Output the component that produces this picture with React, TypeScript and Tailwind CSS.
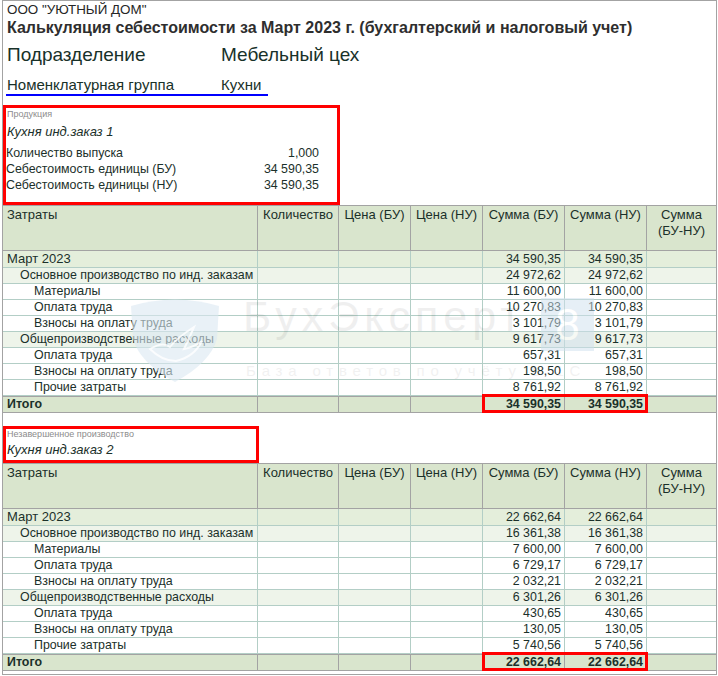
import React from "react";

// Калькуляция себестоимости — печатная форма 1С

type Row = {
    name: string;
    level: 0 | 1 | 2;
    bu: string;
    nu: string;
};

const cols = [
    { title: "Затраты", w: "w-[255px]" },
    { title: "Количество", w: "w-[81px]" },
    { title: "Цена (БУ)", w: "w-[72px]" },
    { title: "Цена (НУ)", w: "w-[72px]" },
    { title: "Сумма (БУ)", w: "w-[82px]" },
    { title: "Сумма (НУ)", w: "w-[82px]" },
    { title: "Сумма (БУ-НУ)", w: "w-[69px]" },
];

const rows1: Row[] = [
    { name: "Март 2023", level: 0, bu: "34 590,35", nu: "34 590,35" },
    { name: "Основное производство по инд. заказам", level: 1, bu: "24 972,62", nu: "24 972,62" },
    { name: "Материалы", level: 2, bu: "11 600,00", nu: "11 600,00" },
    { name: "Оплата труда", level: 2, bu: "10 270,83", nu: "10 270,83" },
    { name: "Взносы на оплату труда", level: 2, bu: "3 101,79", nu: "3 101,79" },
    { name: "Общепроизводственные расходы", level: 1, bu: "9 617,73", nu: "9 617,73" },
    { name: "Оплата труда", level: 2, bu: "657,31", nu: "657,31" },
    { name: "Взносы на оплату труда", level: 2, bu: "198,50", nu: "198,50" },
    { name: "Прочие затраты", level: 2, bu: "8 761,92", nu: "8 761,92" },
];

const rows2: Row[] = [
    { name: "Март 2023", level: 0, bu: "22 662,64", nu: "22 662,64" },
    { name: "Основное производство по инд. заказам", level: 1, bu: "16 361,38", nu: "16 361,38" },
    { name: "Материалы", level: 2, bu: "7 600,00", nu: "7 600,00" },
    { name: "Оплата труда", level: 2, bu: "6 729,17", nu: "6 729,17" },
    { name: "Взносы на оплату труда", level: 2, bu: "2 032,21", nu: "2 032,21" },
    { name: "Общепроизводственные расходы", level: 1, bu: "6 301,26", nu: "6 301,26" },
    { name: "Оплата труда", level: 2, bu: "430,65", nu: "430,65" },
    { name: "Взносы на оплату труда", level: 2, bu: "130,05", nu: "130,05" },
    { name: "Прочие затраты", level: 2, bu: "5 740,56", nu: "5 740,56" },
];

function HeaderRow() {
    return (
        <div className="flex border-y border-[#a3a3a3] bg-[#d9e5cd] text-[13px] leading-[16px]">
            {cols.map((c, i) => (
                <div
                    key={c.title}
                    className={
                        c.w +
                        " h-[44px] pt-[1px] whitespace-nowrap " +
                        (i === 0 ? "pl-[4px] text-left" : "text-center") +
                        (i < cols.length - 1 ? " border-r border-[#a3a3a3]" : "")
                    }
                >
                    {i === 6 ? (
                        <>
                            Сумма
                            <br />
                            (БУ-НУ)
                        </>
                    ) : (
                        c.title
                    )}
                </div>
            ))}
        </div>
    );
}

function DataRow({ row }: { row: Row }) {
    const bg = row.level === 0 ? "bg-[#e4eedb]" : row.level === 1 ? "bg-[#eef4ea]" : "bg-white";
    const h = row.level === 0 ? "h-[16px] leading-[16px]" : "h-[15px] leading-[15px]";
    const indent = row.level === 0 ? "pl-[4px] text-[13px]" : row.level === 1 ? "pl-[17px]" : "pl-[31px]";
    const cells = ["", "", "", row.bu, row.nu, ""];
    return (
        <div className={"flex box-content border-b border-[#b3cec6] text-[12.4px] " + bg + " " + h}>
            <div className={"w-[255px] whitespace-nowrap border-r border-[#b3cec6] " + indent}>{row.name}</div>
            {cells.map((v, i) => (
                <div
                    key={i}
                    className={
                        cols[i + 1].w +
                        " pr-[3px] text-right leading-[15px]" +
                        (row.level === 0 ? " pt-[1px]" : "") +
                        (i < cells.length - 1 ? " border-r border-[#b3cec6]" : "")
                    }
                >
                    {v}
                </div>
            ))}
        </div>
    );
}

function TotalRow({ bu, nu }: { bu: string; nu: string }) {
    const cells = ["", "", "", bu, nu, ""];
    return (
        <div className="relative flex h-[15px] box-content border-y border-[#a3a3a3] bg-[#d9e5cd] text-[12.4px] font-bold leading-[15px]">
            <div className="w-[255px] border-r border-[#a3a3a3] pl-[4px]">Итого</div>
            {cells.map((v, i) => (
                <div
                    key={i}
                    className={
                        cols[i + 1].w +
                        " pr-[3px] text-right" +
                        (i < cells.length - 1 ? " border-r border-[#a3a3a3]" : "")
                    }
                >
                    {v}
                </div>
            ))}
            {/* выделение итоговых сумм */}
            <div className="pointer-events-none absolute left-[479px] top-[-3px] h-[19px] w-[166px] border-[3px] border-[#ff0000]" />
        </div>
    );
}

function CostTable({ rows, bu, nu }: { rows: Row[]; bu: string; nu: string }) {
    return (
        <div className="w-[713px] text-[#1b302a]">
            <HeaderRow />
            {rows.map((r, i) => (
                <DataRow key={i} row={r} />
            ))}
            <TotalRow bu={bu} nu={nu} />
        </div>
    );
}

function Watermark() {
    return (
        <div className="pointer-events-none absolute left-0 top-0 h-full w-full select-none">
            <svg className="absolute left-[125px] top-[296px]" width="94" height="86" viewBox="0 0 94 86">
                <path d="M3 9 Q47 -4 91 9 L89 42 Q82 66 47 85 Q12 66 5 42 Z" fill="#dbe7f2" opacity="0.6" />
                <path
                    d="M22 52 Q35 44 42 50 Q50 40 66 30 Q60 44 56 52 Q66 50 74 44 Q66 60 48 64 Q34 64 22 52 Z"
                    fill="none"
                    stroke="#ffffff"
                    strokeWidth="2"
                    opacity="0.8"
                />
            </svg>
            <div className="absolute left-[240px] top-[291px] text-[43px] leading-[48px] tracking-[5px] text-[#000000] opacity-[0.06]">
                БухЭксперт
            </div>
            <div className="absolute left-[538px] top-[297px] flex h-[53px] w-[53px] items-center justify-center bg-[#cfe0ef] text-[44px] leading-[44px] text-white opacity-[0.5]">
                8
            </div>
            <div className="absolute left-[243px] top-[361px] text-[15px] leading-[18px] tracking-[5.8px] text-[#000000] opacity-[0.05]">
                База ответов по учёту в 1С
            </div>
        </div>
    );
}

export default function App() {
    return (
        <div className="h-[676px] w-[718px] bg-white font-['Liberation_Sans',Arial,sans-serif]">
            <div className="relative ml-[2px] box-border h-[675px] w-[715px] border border-[#a3a3a3]">
                <div className="pl-[4px] text-[13.4px] leading-[17px] text-[#262626]">ООО "УЮТНЫЙ ДОМ"</div>
                <div className="whitespace-nowrap pl-[4px] text-[16px] font-bold leading-[19px] text-[#2e2e2e]">
                    Калькуляция себестоимости за Март 2023 г. (бухгалтерский и налоговый учет)
                </div>
                <div className="mt-[6px] flex h-[24px] text-[19px] leading-[24px] text-[#183129]">
                    <div className="w-[218px] pl-[4px]">Подразделение</div>
                    <div>Мебельный цех</div>
                </div>
                <div className="ml-[3px] mt-[8px] flex h-[21px] w-[262px] border-b-2 border-[#0000ff] text-[15px] leading-[19px] text-[#183129]">
                    <div className="w-[215px] pl-[1px]">Номенклатурная группа</div>
                    <div>Кухни</div>
                </div>

                {/* Продукция */}
                <div className="mt-[9px] box-border h-[100px] w-[337px] border-[3px] border-[#ff0000] text-[#1b302a]">
                    <div className="pl-[1px] text-[9px] leading-[12px] text-[#8c8c8c]">Продукция</div>
                    <div className="mt-[3px] pl-[1px] text-[13px] italic leading-[17px]">Кухня инд.заказ 1</div>
                    <div className="mt-[5px] pr-[18px] text-[12.4px] leading-[16px]">
                        <div className="flex justify-between">
                            <span>Количество выпуска</span>
                            <span>1,000</span>
                        </div>
                        <div className="flex justify-between">
                            <span>Себестоимость единицы (БУ)</span>
                            <span>34 590,35</span>
                        </div>
                        <div className="flex justify-between">
                            <span>Себестоимость единицы (НУ)</span>
                            <span>34 590,35</span>
                        </div>
                    </div>
                </div>

                <CostTable rows={rows1} bu="34 590,35" nu="34 590,35" />

                {/* Незавершенное производство */}
                <div className="mt-[13px] box-border h-[37px] w-[256px] border-[3px] border-[#ff0000] text-[#1b302a]">
                    <div className="pl-[1px] text-[9px] leading-[10px] text-[#8c8c8c]">Незавершенное производство</div>
                    <div className="mt-[2px] pl-[1px] text-[13px] italic leading-[17px]">Кухня инд.заказ 2</div>
                </div>

                <CostTable rows={rows2} bu="22 662,64" nu="22 662,64" />

                <Watermark />
            </div>
        </div>
    );
}
